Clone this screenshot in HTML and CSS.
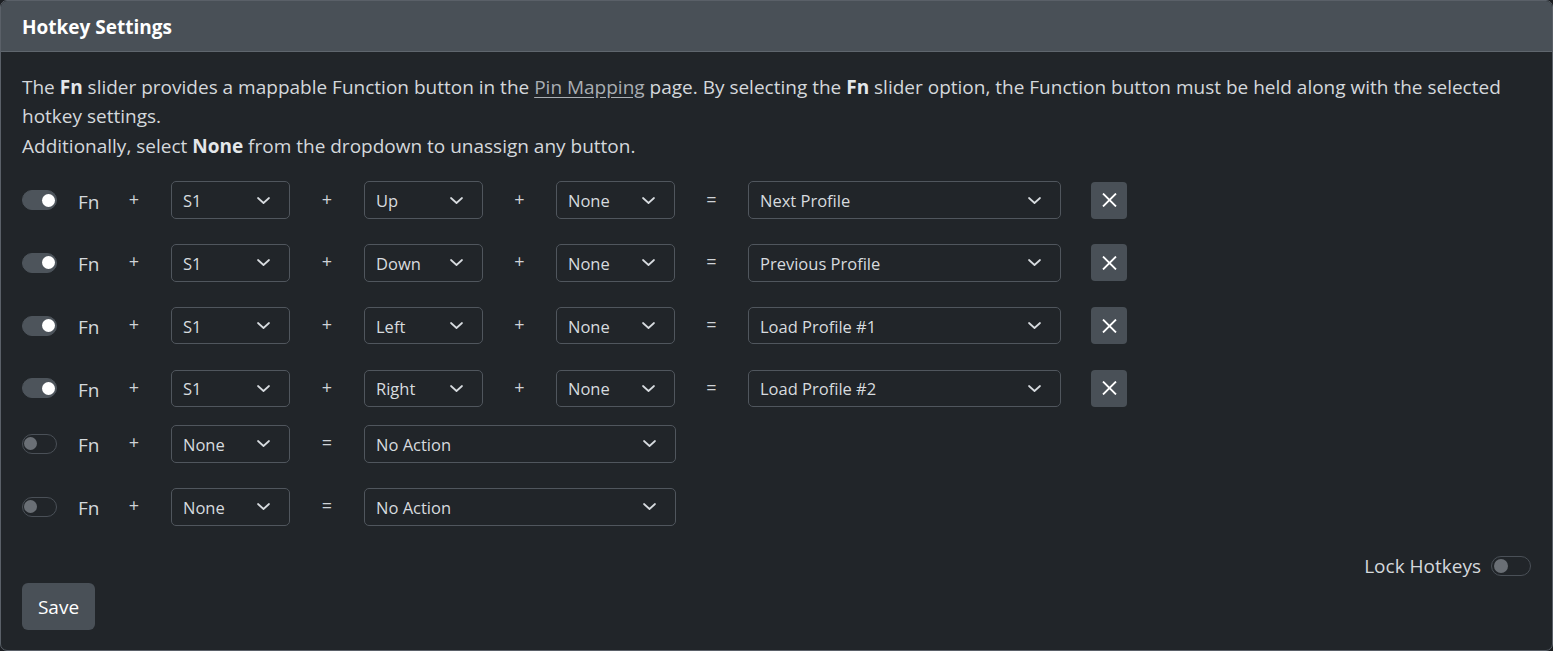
FILE: index.html
```html
<!DOCTYPE html>
<html>
<head>
<meta charset="utf-8">
<link rel="stylesheet" href="styles.css">
</head>
<body>
<div class="card">
  <div class="card-header">Hotkey Settings</div>
  <div class="card-body">
    <p class="intro">The <strong>Fn</strong> slider provides a mappable Function button in the <a class="link" href="#">Pin Mapping</a> page. By selecting the <strong>Fn</strong> slider option, the Function button must be held along with the selected hotkey settings.<br>Additionally, select <strong>None</strong> from the dropdown to unassign any button.</p>

    <div class="group">
      <div class="hk-row">
        <div class="fn-cell"><span class="switch on"></span><span class="fn">Fn</span></div>
        <div class="op">+</div>
        <div class="select key"><span>S1</span><svg class="chev" viewBox="0 0 13 7"><path d="M1 1l5.5 5 5.5-5"/></svg></div>
        <div class="op">+</div>
        <div class="select key"><span>Up</span><svg class="chev" viewBox="0 0 13 7"><path d="M1 1l5.5 5 5.5-5"/></svg></div>
        <div class="op op-n">+</div>
        <div class="select key"><span>None</span><svg class="chev" viewBox="0 0 13 7"><path d="M1 1l5.5 5 5.5-5"/></svg></div>
        <div class="op op-n">=</div>
        <div class="select action"><span>Next Profile</span><svg class="chev" viewBox="0 0 13 7"><path d="M1 1l5.5 5 5.5-5"/></svg></div>
        <button class="btn-x"><svg viewBox="0 0 15 14"><path d="M1 0.5l13 13M14 0.5L1 13.5"/></svg></button>
      </div>
      <div class="hk-row">
        <div class="fn-cell"><span class="switch on"></span><span class="fn">Fn</span></div>
        <div class="op">+</div>
        <div class="select key"><span>S1</span><svg class="chev" viewBox="0 0 13 7"><path d="M1 1l5.5 5 5.5-5"/></svg></div>
        <div class="op">+</div>
        <div class="select key"><span>Down</span><svg class="chev" viewBox="0 0 13 7"><path d="M1 1l5.5 5 5.5-5"/></svg></div>
        <div class="op op-n">+</div>
        <div class="select key"><span>None</span><svg class="chev" viewBox="0 0 13 7"><path d="M1 1l5.5 5 5.5-5"/></svg></div>
        <div class="op op-n">=</div>
        <div class="select action"><span>Previous Profile</span><svg class="chev" viewBox="0 0 13 7"><path d="M1 1l5.5 5 5.5-5"/></svg></div>
        <button class="btn-x"><svg viewBox="0 0 15 14"><path d="M1 0.5l13 13M14 0.5L1 13.5"/></svg></button>
      </div>
      <div class="hk-row">
        <div class="fn-cell"><span class="switch on"></span><span class="fn">Fn</span></div>
        <div class="op">+</div>
        <div class="select key"><span>S1</span><svg class="chev" viewBox="0 0 13 7"><path d="M1 1l5.5 5 5.5-5"/></svg></div>
        <div class="op">+</div>
        <div class="select key"><span>Left</span><svg class="chev" viewBox="0 0 13 7"><path d="M1 1l5.5 5 5.5-5"/></svg></div>
        <div class="op op-n">+</div>
        <div class="select key"><span>None</span><svg class="chev" viewBox="0 0 13 7"><path d="M1 1l5.5 5 5.5-5"/></svg></div>
        <div class="op op-n">=</div>
        <div class="select action"><span>Load Profile #1</span><svg class="chev" viewBox="0 0 13 7"><path d="M1 1l5.5 5 5.5-5"/></svg></div>
        <button class="btn-x"><svg viewBox="0 0 15 14"><path d="M1 0.5l13 13M14 0.5L1 13.5"/></svg></button>
      </div>
      <div class="hk-row">
        <div class="fn-cell"><span class="switch on"></span><span class="fn">Fn</span></div>
        <div class="op">+</div>
        <div class="select key"><span>S1</span><svg class="chev" viewBox="0 0 13 7"><path d="M1 1l5.5 5 5.5-5"/></svg></div>
        <div class="op">+</div>
        <div class="select key"><span>Right</span><svg class="chev" viewBox="0 0 13 7"><path d="M1 1l5.5 5 5.5-5"/></svg></div>
        <div class="op op-n">+</div>
        <div class="select key"><span>None</span><svg class="chev" viewBox="0 0 13 7"><path d="M1 1l5.5 5 5.5-5"/></svg></div>
        <div class="op op-n">=</div>
        <div class="select action"><span>Load Profile #2</span><svg class="chev" viewBox="0 0 13 7"><path d="M1 1l5.5 5 5.5-5"/></svg></div>
        <button class="btn-x"><svg viewBox="0 0 15 14"><path d="M1 0.5l13 13M14 0.5L1 13.5"/></svg></button>
      </div>
    </div>

    <div class="group group-2">
      <div class="hk-row">
        <div class="fn-cell"><span class="switch"></span><span class="fn">Fn</span></div>
        <div class="op">+</div>
        <div class="select key"><span>None</span><svg class="chev" viewBox="0 0 13 7"><path d="M1 1l5.5 5 5.5-5"/></svg></div>
        <div class="op">=</div>
        <div class="select action action-short"><span>No Action</span><svg class="chev" viewBox="0 0 13 7"><path d="M1 1l5.5 5 5.5-5"/></svg></div>
      </div>
      <div class="hk-row">
        <div class="fn-cell"><span class="switch"></span><span class="fn">Fn</span></div>
        <div class="op">+</div>
        <div class="select key"><span>None</span><svg class="chev" viewBox="0 0 13 7"><path d="M1 1l5.5 5 5.5-5"/></svg></div>
        <div class="op">=</div>
        <div class="select action action-short"><span>No Action</span><svg class="chev" viewBox="0 0 13 7"><path d="M1 1l5.5 5 5.5-5"/></svg></div>
      </div>
    </div>

    <div class="lock-row">
      <span class="lock-label">Lock Hotkeys</span>
      <span class="switch switch-lg"></span>
    </div>
    <button class="btn-save">Save</button>
  </div>
</div>
</body>
</html>
```

FILE: styles.css
```css
* { box-sizing: border-box; }
html, body {
  margin: 0;
  padding: 0;
  background: #1c1f23;
}
body {
  font-family: "Open Sans", "Noto Sans", "Liberation Sans", sans-serif;
  color: #d4d8dc;
}
.card {
  width: 1553px;
  height: 651px;
  background: #212529;
  border: 1px solid #5a6068;
  border-radius: 7px;
  overflow: hidden;
  display: flex;
  flex-direction: column;
}
.card-header {
  height: 51px;
  background: #495057;
  border-bottom: 1px solid #5f666d;
  padding: 2px 21px 0 21px;
  display: flex;
  align-items: center;
  font-size: 19px;
  font-weight: 700;
  color: #ffffff;
}
.card-body {
  flex: 1;
  padding: 21px 21px 20px 21px;
  display: flex;
  flex-direction: column;
}
.intro {
  margin: 0 0 20px 0;
  font-size: 19px;
  line-height: 29.5px;
}
.intro strong { color: #e4e7ea; font-weight: 700; }
.link {
  color: #a9aeb3;
  text-decoration: underline;
  text-underline-offset: 3px;
}
.group {
  display: flex;
  flex-direction: column;
  gap: 25.3px;
}
.group-2 { margin-top: 18px; }
.hk-row {
  display: flex;
  align-items: center;
  height: 37.5px;
}
.fn-cell {
  width: 75px;
  display: flex;
  align-items: center;
}
.fn {
  margin-left: 21px;
  font-size: 19px;
  padding-top: 3px;
}
.op {
  width: 74px;
  text-align: center;
  font-size: 18px;
  color: #cfd3d7;
  padding-bottom: 3px;
}
.op-n { width: 73px; }
.switch {
  display: inline-block;
  position: relative;
  width: 35px;
  height: 20px;
  border-radius: 10px;
  border: 1px solid #4a5057;
  background: transparent;
  flex: none;
}
.switch::after {
  content: "";
  position: absolute;
  top: 2.5px;
  left: 1px;
  width: 13px;
  height: 13px;
  border-radius: 50%;
  background: #6a6f75;
}
.switch.on {
  background: #4d545b;
  border-color: #4d545b;
}
.switch.on::after {
  left: auto;
  right: 1px;
  background: #ffffff;
}
.switch-lg {
  width: 40px;
  height: 20px;
}
.switch-lg::after {
  width: 14px;
  height: 14px;
  top: 2px;
  left: 1.5px;
}
.select {
  height: 37.5px;
  border: 1px solid #50565d;
  border-radius: 5px;
  background: #212529;
  display: flex;
  align-items: center;
  justify-content: space-between;
  padding: 0 19px 0 11px;
  font-size: 16.5px;
  color: #d7dbdf;
}
.select span { padding-top: 1px; }
.key { width: 119px; }
.action { width: 313px; }
.action-short { width: 312px; }
.chev {
  width: 13px;
  height: 7px;
  fill: none;
  stroke: #d7dbdf;
  stroke-width: 1.7;
  stroke-linecap: round;
  stroke-linejoin: round;
}
.btn-x {
  margin-left: 30px;
  width: 36px;
  height: 37px;
  border: none;
  border-radius: 4px;
  background: #495057;
  display: flex;
  align-items: center;
  justify-content: center;
  padding: 0;
}
.btn-x svg {
  width: 15px;
  height: 14px;
  fill: none;
  stroke: #ffffff;
  stroke-width: 1.8;
}
.lock-row {
  margin-top: 26px;
  height: 29px;
  display: flex;
  align-items: center;
  justify-content: flex-end;
  gap: 10px;
}
.lock-label {
  font-size: 19px;
  color: #d4d8dc;
}
.btn-save {
  margin-top: 2.5px;
  align-self: flex-start;
  height: 47px;
  width: 73px;
  border: none;
  border-radius: 6px;
  background: #495057;
  color: #ffffff;
  font-family: inherit;
  font-size: 19px;
  padding: 0;
}
```
